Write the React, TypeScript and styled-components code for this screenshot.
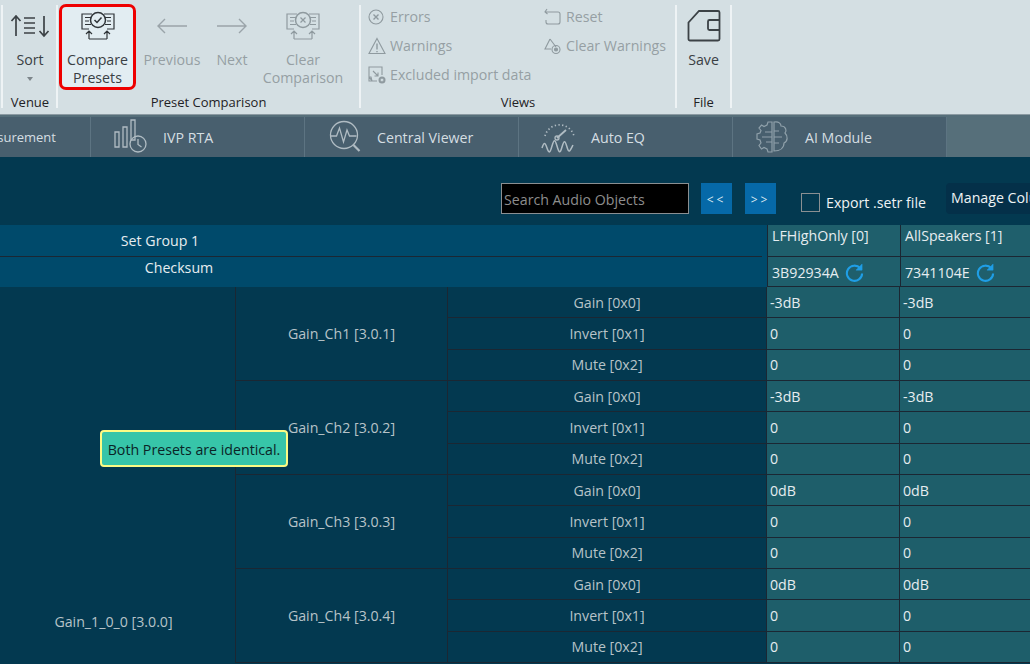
import React from "react";
import styled, { createGlobalStyle } from "styled-components";

const GlobalStyle = createGlobalStyle`
  html, body { margin: 0; padding: 0; background: #033950; }
  * { box-sizing: border-box; }
  body { font-family: "Open Sans", "Noto Sans", sans-serif; }
`;

const CompareIcon = ({ mark, dim }: { mark: "check" | "cross"; dim?: boolean }) => (
  <svg width="36" height="30" viewBox="0 0 36 30" fill="none" stroke={dim ? "#8f9a9f" : "#2f3438"} strokeWidth="1.2">
    <path d="M12 3H2V18H9M24 3H34V18H27" />
    <path d="M5 6.500h6M5 10h4M5 13.500h6M31 6.500h-6M31 10h-4M31 13.500h-6" />
    <circle cx="18" cy="9" r="7.500" strokeWidth="1.500" />
    {mark === "check" ? <path d="M14.500 9l2.500 2.500 4.500-5" strokeWidth="1.500" /> : <path d="M15.500 6.500l5 5M20.500 6.500l-5 5" />}
    <path d="M9 28V20M6 23l3-3 3 3M27 28V20M24 23l3-3 3 3M9 28h18" />
  </svg>
);

const SortIcon = () => (
  <svg width="40" height="24" viewBox="0 0 40 24" fill="none" stroke="#3c4246" strokeWidth="1.700">
    <path d="M6 22V2M1.500 7L6 2l4.500 5M34 2v20M29.500 17l4.500 5 4.500-5" />
    <path d="M14 4h11M14 9h11M14 14h11M14 19h11" strokeWidth="1.400" />
  </svg>
);

const ArrowIcon = ({ left }: { left?: boolean }) => (
  <svg width="32" height="18" viewBox="0 0 32 18" fill="none" stroke="#9aa4a9" strokeWidth="1.400">
    {left ? <path d="M31 9H2M9 2L2 9l7 7" /> : <path d="M1 9h29M23 2l7 7-7 7" />}
  </svg>
);

const SaveIcon = () => (
  <svg width="34" height="34" viewBox="0 0 34 34" fill="none" stroke="#3c4246" strokeWidth="1.800">
    <path d="M12 2H31a1.500 1.500 0 0 1 1.500 1.500V30a1.500 1.500 0 0 1-1.500 1.500H3A1.500 1.500 0 0 1 1.500 30V13.500z" />
    <path d="M32.500 11H22.500a1.500 1.500 0 0 0-1.500 1.500v7a1.500 1.500 0 0 0 1.500 1.500H32.500" />
  </svg>
);

const MiniIcon = ({ kind }: { kind: string }) => (
  <svg width="18" height="18" viewBox="0 0 18 18" fill="none" stroke="#8f9a9f" strokeWidth="1.100">
    {kind === "errors" && (
      <>
        <circle cx="8" cy="9" r="7" />
        <path d="M5.500 6.500l5 5M10.500 6.500l-5 5" strokeWidth="1.400" />
      </>
    )}
    {kind === "warnings" && (
      <>
        <path d="M9 1.500L17 16.500H1z" />
        <path d="M9 6.500v6M9 14v1.200" strokeWidth="1.400" />
      </>
    )}
    {kind === "excluded" && (
      <>
        <path d="M9 15H1V1h13v8M1 11l3 4M4 15l-1-4H1M5 5l5 5M10 6.500V10H6.500" />
        <circle cx="14" cy="14" r="3.500" fill="#8f9a9f" stroke="none" />
        <path d="M12.800 12.800l2.400 2.400M15.200 12.800l-2.400 2.400" stroke="#d4dfe3" />
      </>
    )}
    {kind === "reset" && <path d="M3 1L1 4l2.500 2M1.500 4H14a2 2 0 0 1 2 2v8a2 2 0 0 1-2 2H4a2 2 0 0 1-2-2v-2" />}
    {kind === "clear" && (
      <>
        <path d="M6 2l6 8M6 2L1 12h6" />
        <circle cx="12" cy="12.500" r="4" />
        <circle cx="12" cy="12.500" r="1.500" fill="#8f9a9f" />
      </>
    )}
  </svg>
);

const RtaIcon = () => (
  <svg width="36" height="36" viewBox="0 0 36 36" fill="none" stroke="#b0bcc3" strokeWidth="1.300">
    <path d="M2 13h4v15H2zM10 8h4v20h-4zM18 1h4v20h-4z" />
    <circle cx="25" cy="25" r="8" />
    <path d="M25 20v5.500l3.500 2.500" />
  </svg>
);

const ViewerIcon = () => (
  <svg width="36" height="36" viewBox="0 0 36 36" fill="none" stroke="#b0bcc3" strokeWidth="1.300">
    <circle cx="17" cy="16" r="13.500" />
    <path d="M3.500 17h6l3-8 4 14 3.500-12 2.500 6h7" />
    <path d="M26.500 26l6 6" strokeWidth="2.200" />
  </svg>
);

const GaugeIcon = () => (
  <svg width="36" height="36" viewBox="0 0 36 36" fill="none" stroke="#b0bcc3" strokeWidth="1.300">
    <path d="M4 17A15 15 0 0 1 33 17" strokeDasharray="1.300 2.400" strokeWidth="1.700" />
    <path d="M16 19l9-8" strokeWidth="1.800" />
    <circle cx="16" cy="19" r="2" />
    <path d="M1 29c2-6 3-6 5 0s3 5 5-2 3-7 5 0 3 8 5 1 3-7 5 0 3 4 6-2" strokeWidth="1.500" />
  </svg>
);

const BrainIcon = () => (
  <svg width="36" height="36" viewBox="0 0 36 36" fill="none" stroke="#8fa0aa" strokeWidth="1.200">
    <path d="M17 3h-4l-1 3-3 1.500L6.500 6 4 9l2 2.500L5 14l-3 1v5l3 1 1 3-2 2.500L6.500 30 9 28.500l3 1.500 1 3h4z" />
    <path d="M19 3c5-1 7 2 7 4 5 0 6 5 4 7 3 3 3 8-1 10 0 5-4 8-10 8z" />
    <path d="M7 18h10M10 13h7M11 23h6M19 12h5M19 18h8M19 24h5" />
  </svg>
);

const RefreshIcon = () => (
  <svg width="19" height="19" viewBox="0 0 20 20" fill="none" stroke="#1f9ee6" strokeWidth="2.200">
    <path d="M16 5.500A8 8 0 1 0 18 11" />
    <path d="M18 1v6.500h-6.500z" fill="#1f9ee6" strokeWidth="0.500" />
  </svg>
);

const Page = styled.div`
  position: relative;
  width: 1030px;
  height: 664px;
  overflow: hidden;
  background: #033950;
`;

const Ribbon = styled.div`
  display: flex;
  height: 114px;
  padding-left: 1px;
  background: #d4dfe3;
  color: #1f2225;
  font-size: 14.200px;
`;

const Separator = styled.div`
  flex: none;
  width: 2px;
  height: 103px;
  margin-top: 5px;
  background: #eef3f5;
`;

const Group = styled.div<{ $width: number; $left: number }>`
  flex: none;
  display: flex;
  flex-direction: column;
  width: ${({ $width }) => $width}px;
  margin-left: ${({ $left }) => $left}px;
`;

const GroupBody = styled.div`
  display: flex;
  height: 92px;
  padding-top: 4px;
`;

const GroupLabel = styled.div`
  height: 20px;
  line-height: 20px;
  text-align: center;
  font-size: 13px;
`;

const RibbonButton = styled.div<{ $width: number; $left?: number; $active?: boolean; $off?: boolean }>`
  flex: none;
  display: flex;
  flex-direction: column;
  align-items: center;
  width: ${({ $width }) => $width}px;
  height: 86px;
  margin-left: ${({ $left }) => $left ?? 0}px;
  text-align: center;
  line-height: 18px;
  white-space: nowrap;
  color: ${({ $off }) => ($off ? "#969fa4" : "#3a4044")};
  background: ${({ $active }) => ($active ? "#e2edf2" : "transparent")};
  border: ${({ $active }) => ($active ? "3px solid #ee0000" : "3px solid transparent")};
  border-radius: 7px;
`;

const IconSlot = styled.div`
  display: flex;
  align-items: center;
  justify-content: center;
  flex: none;
  height: 44px;
  margin-top: -3px;
  margin-bottom: 3px;
`;

const Caret = styled.div`
  width: 0;
  height: 0;
  margin-top: 8px;
  border-left: 3px solid transparent;
  border-right: 3px solid transparent;
  border-top: 4px solid #7d868b;
`;

const ViewsGrid = styled.div`
  display: grid;
  grid-template-columns: 176px 1fr;
  grid-auto-rows: 29px;
  margin-top: -2px;
  padding-left: 7px;
`;

const ViewItem = styled.div`
  display: flex;
  align-items: center;
  gap: 4px;
  white-space: nowrap;
  color: #969fa4;
`;

const TabBar = styled.div`
  display: flex;
  height: 43px;
  border-top: 1px solid #8b9aa2;
  background: #566f7a;
  overflow: hidden;
`;

const Tabs = styled.div`
  display: flex;
  flex: none;
  width: 946px;
  margin-top: 2px;
  background: #485f6e;
`;

const Tab = styled.div<{ $first?: boolean }>`
  flex: none;
  display: flex;
  align-items: center;
  width: 214px;
  padding-left: ${({ $first }) => ($first ? "44px" : "22px")};
  margin-left: ${({ $first }) => ($first ? "-123px" : "0")};
  border-right: 1px solid #5d7482;
  color: #d5dee2;
  font-size: ${({ $first }) => ($first ? "13px" : "14.200px")};
  white-space: nowrap;
`;

const TabIcon = styled.div`
  flex: none;
  display: flex;
  width: 50px;
`;

const Toolbar = styled.div`
  position: relative;
  display: flex;
  align-items: flex-start;
  height: 68px;
  padding: 26px 0 0 501px;
  color: #eef3f5;
  font-size: 14.200px;
  white-space: nowrap;
`;

const SearchBox = styled.div`
  flex: none;
  width: 188px;
  height: 31px;
  padding-left: 2px;
  line-height: 31px;
  background: #000;
  border: 1px solid #8a8f92;
  color: #8d8d8d;
`;

const PageButton = styled.div<{ $gap: number }>`
  flex: none;
  width: 31px;
  height: 31px;
  margin-left: ${({ $gap }) => $gap}px;
  line-height: 34px;
  text-align: center;
  font-size: 12px;
  letter-spacing: 3px;
  background: #0669a8;
  color: #dbe8f0;
`;

const CheckBox = styled.div`
  flex: none;
  width: 19px;
  height: 19px;
  margin: 10px 6px 0 25px;
  border: 1px solid #8a8f92;
`;

const ExportLabel = styled.div`
  flex: none;
  width: 120px;
  margin-top: 10px;
  line-height: 20px;
`;

const ManageButton = styled.div`
  flex: none;
  width: 120px;
  height: 31px;
  padding-left: 5px;
  line-height: 29px;
  background: #043049;
  border-radius: 4px;
`;

const HeaderRow = styled.div<{ $height: number }>`
  display: flex;
  height: ${({ $height }) => $height}px;
  color: #e6edf0;
  font-size: 14.200px;
`;

const HeaderTitle = styled.div<{ $textWidth: number; $top: number; $lined?: boolean }>`
  flex: none;
  width: 767px;
  padding-top: ${({ $top }) => $top}px;
  padding-right: ${({ $textWidth }) => 767 - $textWidth}px;
  text-align: center;
  background: #004a6b;
  box-shadow: ${({ $lined }) => ($lined ? "inset -5px 0 0 #004a6b, inset 0 -1px 0 #1b2733" : "none")};
`;

const HeaderCell = styled.div<{ $tall?: boolean }>`
  flex: none;
  display: flex;
  align-items: center;
  gap: 6px;
  width: 133px;
  padding: ${({ $tall }) => ($tall ? "1px 0 0 4px" : "0 0 10px 4px")};
  background: #1f5f6c;
  border-left: 1px solid #1b2733;
  border-bottom: 1px solid #1b2733;
  white-space: nowrap;
`;

const Body = styled.div`
  display: flex;
  color: #b7c3c8;
  font-size: 14.200px;
`;

const RootCell = styled.div`
  flex: none;
  display: flex;
  align-items: center;
  justify-content: center;
  width: 235px;
  height: 668px;
  padding-right: 8px;
`;

const Groups = styled.div`
  flex: none;
  display: flex;
  flex-direction: column;
`;

const ChannelGroup = styled.div`
  display: flex;
  height: 94px;
  border-bottom: 1px solid #1b2733;
`;

const ChannelCell = styled.div`
  flex: none;
  display: flex;
  align-items: center;
  justify-content: center;
  width: 212px;
  padding-bottom: 1px;
  border-left: 1px solid #1b2733;
`;

const Rows = styled.div`
  flex: none;
  display: flex;
  flex-direction: column;
`;

const Row = styled.div`
  flex: 1;
  display: flex;
  align-items: stretch;
  &:not(:last-child) {
    border-bottom: 1px solid #1b2733;
  }
`;

const ParamCell = styled.div`
  flex: none;
  display: flex;
  align-items: center;
  justify-content: center;
  width: 319px;
  border-left: 1px solid #1b2733;
`;

const ValueCell = styled.div`
  flex: none;
  display: flex;
  align-items: center;
  width: 133px;
  padding-left: 3px;
  background: #1e5e6a;
  border-left: 1px solid #1b2733;
  color: #e6edf0;
`;

const Toast = styled.div`
  position: absolute;
  left: 100px;
  top: 430px;
  width: 188px;
  height: 37px;
  line-height: 36px;
  text-align: center;
  font-size: 14.200px;
  white-space: nowrap;
  color: #0a2426;
  background: #37c5a9;
  border: 2px solid #fcfb84;
  border-radius: 4px;
`;

const channels = [
  { name: "Gain_Ch1 [3.0.1]", gain: ["-3dB", "-3dB"] },
  { name: "Gain_Ch2 [3.0.2]", gain: ["-3dB", "-3dB"] },
  { name: "Gain_Ch3 [3.0.3]", gain: ["0dB", "0dB"] },
  { name: "Gain_Ch4 [3.0.4]", gain: ["0dB", "0dB"] },
];

const ParamRow = ({ label, values }: { label: string; values: string[] }) => (
  <Row>
    <ParamCell>{label}</ParamCell>
    {values.map((v, i) => (
      <ValueCell key={i}>{v}</ValueCell>
    ))}
  </Row>
);

const App = () => {
  return (
    <Page>
      <GlobalStyle />
      <Ribbon>
        <Separator />
        <Group $width={52} $left={1}>
          <GroupBody>
            <RibbonButton $width={52}>
              <IconSlot>
                <SortIcon />
              </IconSlot>
              Sort
              <Caret />
            </RibbonButton>
          </GroupBody>
          <GroupLabel>Venue</GroupLabel>
        </Group>
        <Separator />
        <Group $width={301} $left={0}>
          <GroupBody>
            <RibbonButton $width={77} $left={1} $active>
              <IconSlot>
                <CompareIcon mark="check" />
              </IconSlot>
              Compare
              <br />
              Presets
            </RibbonButton>
            <RibbonButton $width={60} $left={6} $off>
              <IconSlot>
                <ArrowIcon left />
              </IconSlot>
              Previous
            </RibbonButton>
            <RibbonButton $width={60} $off>
              <IconSlot>
                <ArrowIcon />
              </IconSlot>
              Next
            </RibbonButton>
            <RibbonButton $width={82} $off>
              <IconSlot>
                <CompareIcon mark="cross" dim />
              </IconSlot>
              Clear
              <br />
              Comparison
            </RibbonButton>
          </GroupBody>
          <GroupLabel>Preset Comparison</GroupLabel>
        </Group>
        <Separator />
        <Group $width={314} $left={0}>
          <GroupBody>
            <ViewsGrid>
              <ViewItem>
                <MiniIcon kind="errors" />
                Errors
              </ViewItem>
              <ViewItem>
                <MiniIcon kind="reset" />
                Reset
              </ViewItem>
              <ViewItem>
                <MiniIcon kind="warnings" />
                Warnings
              </ViewItem>
              <ViewItem>
                <MiniIcon kind="clear" />
                Clear Warnings
              </ViewItem>
              <ViewItem>
                <MiniIcon kind="excluded" />
                Excluded import data
              </ViewItem>
            </ViewsGrid>
          </GroupBody>
          <GroupLabel>Views</GroupLabel>
        </Group>
        <Separator />
        <Group $width={53} $left={0}>
          <GroupBody>
            <RibbonButton $width={53}>
              <IconSlot>
                <SaveIcon />
              </IconSlot>
              Save
            </RibbonButton>
          </GroupBody>
          <GroupLabel>File</GroupLabel>
        </Group>
        <Separator />
      </Ribbon>

      <TabBar>
        <Tabs>
          <Tab $first>
            <TabIcon />
            Measurement
          </Tab>
          <Tab>
            <TabIcon>
              <RtaIcon />
            </TabIcon>
            IVP RTA
          </Tab>
          <Tab>
            <TabIcon>
              <ViewerIcon />
            </TabIcon>
            Central Viewer
          </Tab>
          <Tab>
            <TabIcon>
              <GaugeIcon />
            </TabIcon>
            Auto EQ
          </Tab>
          <Tab>
            <TabIcon>
              <BrainIcon />
            </TabIcon>
            AI Module
          </Tab>
        </Tabs>
      </TabBar>

      <Toolbar>
        <SearchBox>Search Audio Objects</SearchBox>
        <PageButton $gap={12}>&lt;&lt;</PageButton>
        <PageButton $gap={13}>&gt;&gt;</PageButton>
        <CheckBox />
        <ExportLabel>Export .setr file</ExportLabel>
        <ManageButton>Manage Columns</ManageButton>
      </Toolbar>

      <HeaderRow $height={32}>
        <HeaderTitle $textWidth={320} $top={6} $lined>
          Set Group 1
        </HeaderTitle>
        <HeaderCell>LFHighOnly [0]</HeaderCell>
        <HeaderCell>AllSpeakers [1]</HeaderCell>
      </HeaderRow>
      <HeaderRow $height={30}>
        <HeaderTitle $textWidth={358} $top={1}>
          Checksum
        </HeaderTitle>
        <HeaderCell $tall>
          3B92934A <RefreshIcon />
        </HeaderCell>
        <HeaderCell $tall>
          7341104E <RefreshIcon />
        </HeaderCell>
      </HeaderRow>

      <Body>
        <RootCell>Gain_1_0_0 [3.0.0]</RootCell>
        <Groups>
          {channels.map((ch) => (
            <ChannelGroup key={ch.name}>
              <ChannelCell>{ch.name}</ChannelCell>
              <Rows>
                <ParamRow label="Gain [0x0]" values={ch.gain} />
                <ParamRow label="Invert [0x1]" values={["0", "0"]} />
                <ParamRow label="Mute [0x2]" values={["0", "0"]} />
              </Rows>
            </ChannelGroup>
          ))}
        </Groups>
      </Body>

      <Toast>Both Presets are identical.</Toast>
    </Page>
  );
};

export default App;
